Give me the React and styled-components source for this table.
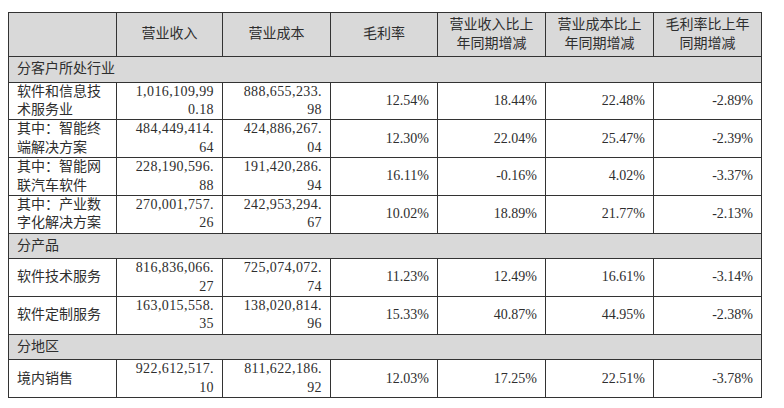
import React from "react";
import styled, { createGlobalStyle } from "styled-components";

const GlobalStyle = createGlobalStyle`
  body {
    margin: 0;
    padding: 12px 0 0 8px;
    background: #fff;
    font-family: "Liberation Serif", "Noto Sans CJK SC", serif;
    color: #2e2e2e;
  }
`;

const COLS = [108, 106, 108, 107, 108, 108, 108];

const HEADERS = [
  "",
  "营业收入",
  "营业成本",
  "毛利率",
  "营业收入比上\n年同期增减",
  "营业成本比上\n年同期增减",
  "毛利率比上年\n同期增减",
];

const SECTIONS = [
  {
    title: "分客户所处行业",
    rows: [
      ["软件和信息技\n术服务业", "1,016,109,99\n0.18", "888,655,233.\n98", "12.54%", "18.44%", "22.48%", "-2.89%"],
      ["其中：智能终\n端解决方案", "484,449,414.\n64", "424,886,267.\n04", "12.30%", "22.04%", "25.47%", "-2.39%"],
      ["其中：智能网\n联汽车软件", "228,190,596.\n88", "191,420,286.\n94", "16.11%", "-0.16%", "4.02%", "-3.37%"],
      ["其中：产业数\n字化解决方案", "270,001,757.\n26", "242,953,294.\n67", "10.02%", "18.89%", "21.77%", "-2.13%"],
    ],
  },
  {
    title: "分产品",
    rows: [
      ["软件技术服务", "816,836,066.\n27", "725,074,072.\n74", "11.23%", "12.49%", "16.61%", "-3.14%"],
      ["软件定制服务", "163,015,558.\n35", "138,020,814.\n96", "15.33%", "40.87%", "44.95%", "-2.38%"],
    ],
  },
  {
    title: "分地区",
    rows: [
      ["境内销售", "922,612,517.\n10", "811,622,186.\n92", "12.03%", "17.25%", "22.51%", "-3.78%"],
    ],
  },
];

const Table = styled.table`
  width: 753px;
  table-layout: fixed;
  border-collapse: collapse;
  font-size: 14px;
  border: 1px solid #333;
`;

const HeadCell = styled.th`
  background: #d9d9d9;
  border: 1px solid #333;
  font-weight: normal;
  text-align: center;
  vertical-align: middle;
  padding: 3px 4px;
  height: 37px;
  line-height: 18.5px;
  white-space: pre-line;
`;

const SectionCell = styled.td`
  background: #d9d9d9;
  border: 1px solid #333;
  padding: 3px 8px;
  line-height: 18.5px;
`;

const NameCell = styled.td`
  border: 1px solid #333;
  padding: 0 8px;
  height: 36.8px;
  line-height: 18.4px;
  white-space: pre-line;
  vertical-align: middle;
`;

const NumCell = styled.td`
  border: 1px solid #333;
  padding: 0 8px;
  line-height: 18.4px;
  text-align: right;
  white-space: pre-line;
  vertical-align: middle;
  letter-spacing: ${(p) => (p.$wide ? "0.4px" : "0")};
`;

export default function App() {
  return (
    <>
      <GlobalStyle />
      <Table>
        <colgroup>
          {COLS.map((w, i) => (
            <col key={i} style={{ width: w }} />
          ))}
        </colgroup>
        <thead>
          <tr>
            {HEADERS.map((h, i) => (
              <HeadCell key={i}>{h}</HeadCell>
            ))}
          </tr>
        </thead>
        <tbody>
          {SECTIONS.map((s) => (
            <React.Fragment key={s.title}>
              <tr>
                <SectionCell colSpan={7}>{s.title}</SectionCell>
              </tr>
              {s.rows.map((r) => (
                <tr key={r[0]}>
                  <NameCell>{r[0]}</NameCell>
                  {r.slice(1).map((v, i) => (
                    <NumCell key={i} $wide={i < 2}>
                      {v}
                    </NumCell>
                  ))}
                </tr>
              ))}
            </React.Fragment>
          ))}
        </tbody>
      </Table>
    </>
  );
}
